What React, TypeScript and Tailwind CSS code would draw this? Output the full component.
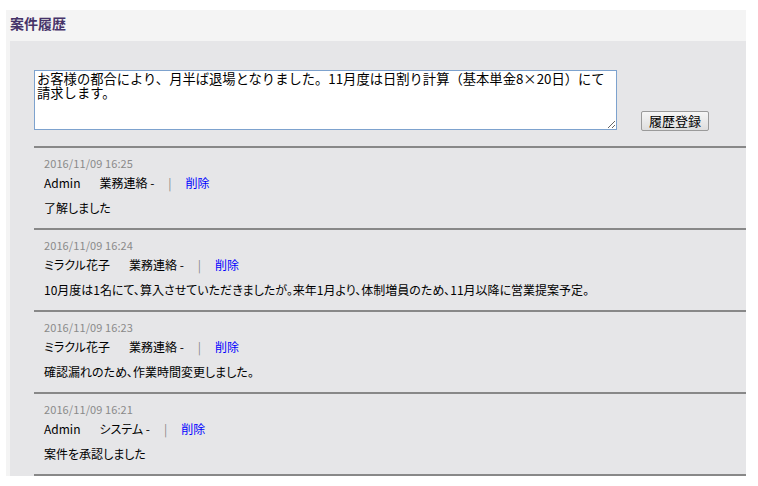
import { useState } from 'react'

type HistoryEntry = {
  id: number
  at: string
  user: string
  category: string
  body: string
}

const ENTRIES: HistoryEntry[] = [
  { id: 4, at: '2016/11/09 16:25', user: 'Admin', category: '業務連絡', body: '了解しました' },
  {
    id: 3,
    at: '2016/11/09 16:24',
    user: 'ミラクル花子',
    category: '業務連絡',
    body: '10月度は1名にて、算入させていただきましたが。来年1月より、体制増員のため、11月以降に営業提案予定。',
  },
  { id: 2, at: '2016/11/09 16:23', user: 'ミラクル花子', category: '業務連絡', body: '確認漏れのため、作業時間変更しました。' },
  { id: 1, at: '2016/11/09 16:21', user: 'Admin', category: 'システム', body: '案件を承認しました' },
]

const font = "font-['Noto_Sans_CJK_JP','Noto_Sans',sans-serif]"

function EntryRow({ entry }: { entry: HistoryEntry }) {
  return (
    <li className="border-t-2 border-[#888888] pt-[7px] pb-[12px] pl-[10px]">
      <div className="h-4 text-[11px] leading-4 tracking-[0.1px] text-[#8a8a8a]">{entry.at}</div>
      <div className="mt-1 flex h-4 items-center text-[12px] leading-4 text-black [font-feature-settings:'palt']">
        <span className="mr-[19px]">{entry.user}</span>
        <span>{entry.category} -</span>
        <span className="mx-[14px] text-[#888888]">|</span>
        <a href="#" className="text-[#0000ff]">
          削除
        </a>
      </div>
      <div className="mt-[9px] h-4 text-[12px] leading-4 text-black [font-feature-settings:'palt']">
        {entry.body}
      </div>
    </li>
  )
}

export default function App() {
  const [memo, setMemo] = useState(
    'お客様の都合により、月半ば退場となりました。11月度は日割り計算（基本単金8×20日）にて請求します。',
  )

  return (
    <div className={`min-h-[486px] bg-white pt-[10px] pl-[6px] ${font}`}>
      <section className="w-[740px] bg-[#f4f4f4] pl-1">
        <h2 className="h-[31px] pt-[3px] text-[14px] font-bold leading-[20px] text-[#463369]">案件履歴</h2>
        <div className="bg-[#e6e6e8] pt-[29px]">
          <div className="flex items-end pl-6">
            <textarea
              value={memo}
              onChange={(e) => setMemo(e.target.value)}
              className="h-[60px] w-[583px] resize-y border border-[#7da2ce] bg-white py-[1px] pr-[10px] pl-[2px] text-[13.3px]/[14px] text-black outline-none"
            />
            <button
              type="button"
              className="mb-[-1px] ml-6 h-5 w-[68px] rounded-[2px] border border-[#9a9a9a] bg-gradient-to-b from-[#f6f6f6] to-[#dedede] text-[13px] leading-[18px] text-black"
            >
              履歴登録
            </button>
          </div>
          <ul className="mt-4 ml-6 border-b-2 border-[#888888]">
            {ENTRIES.map((entry) => (
              <EntryRow key={entry.id} entry={entry} />
            ))}
          </ul>
        </div>
      </section>
    </div>
  )
}
